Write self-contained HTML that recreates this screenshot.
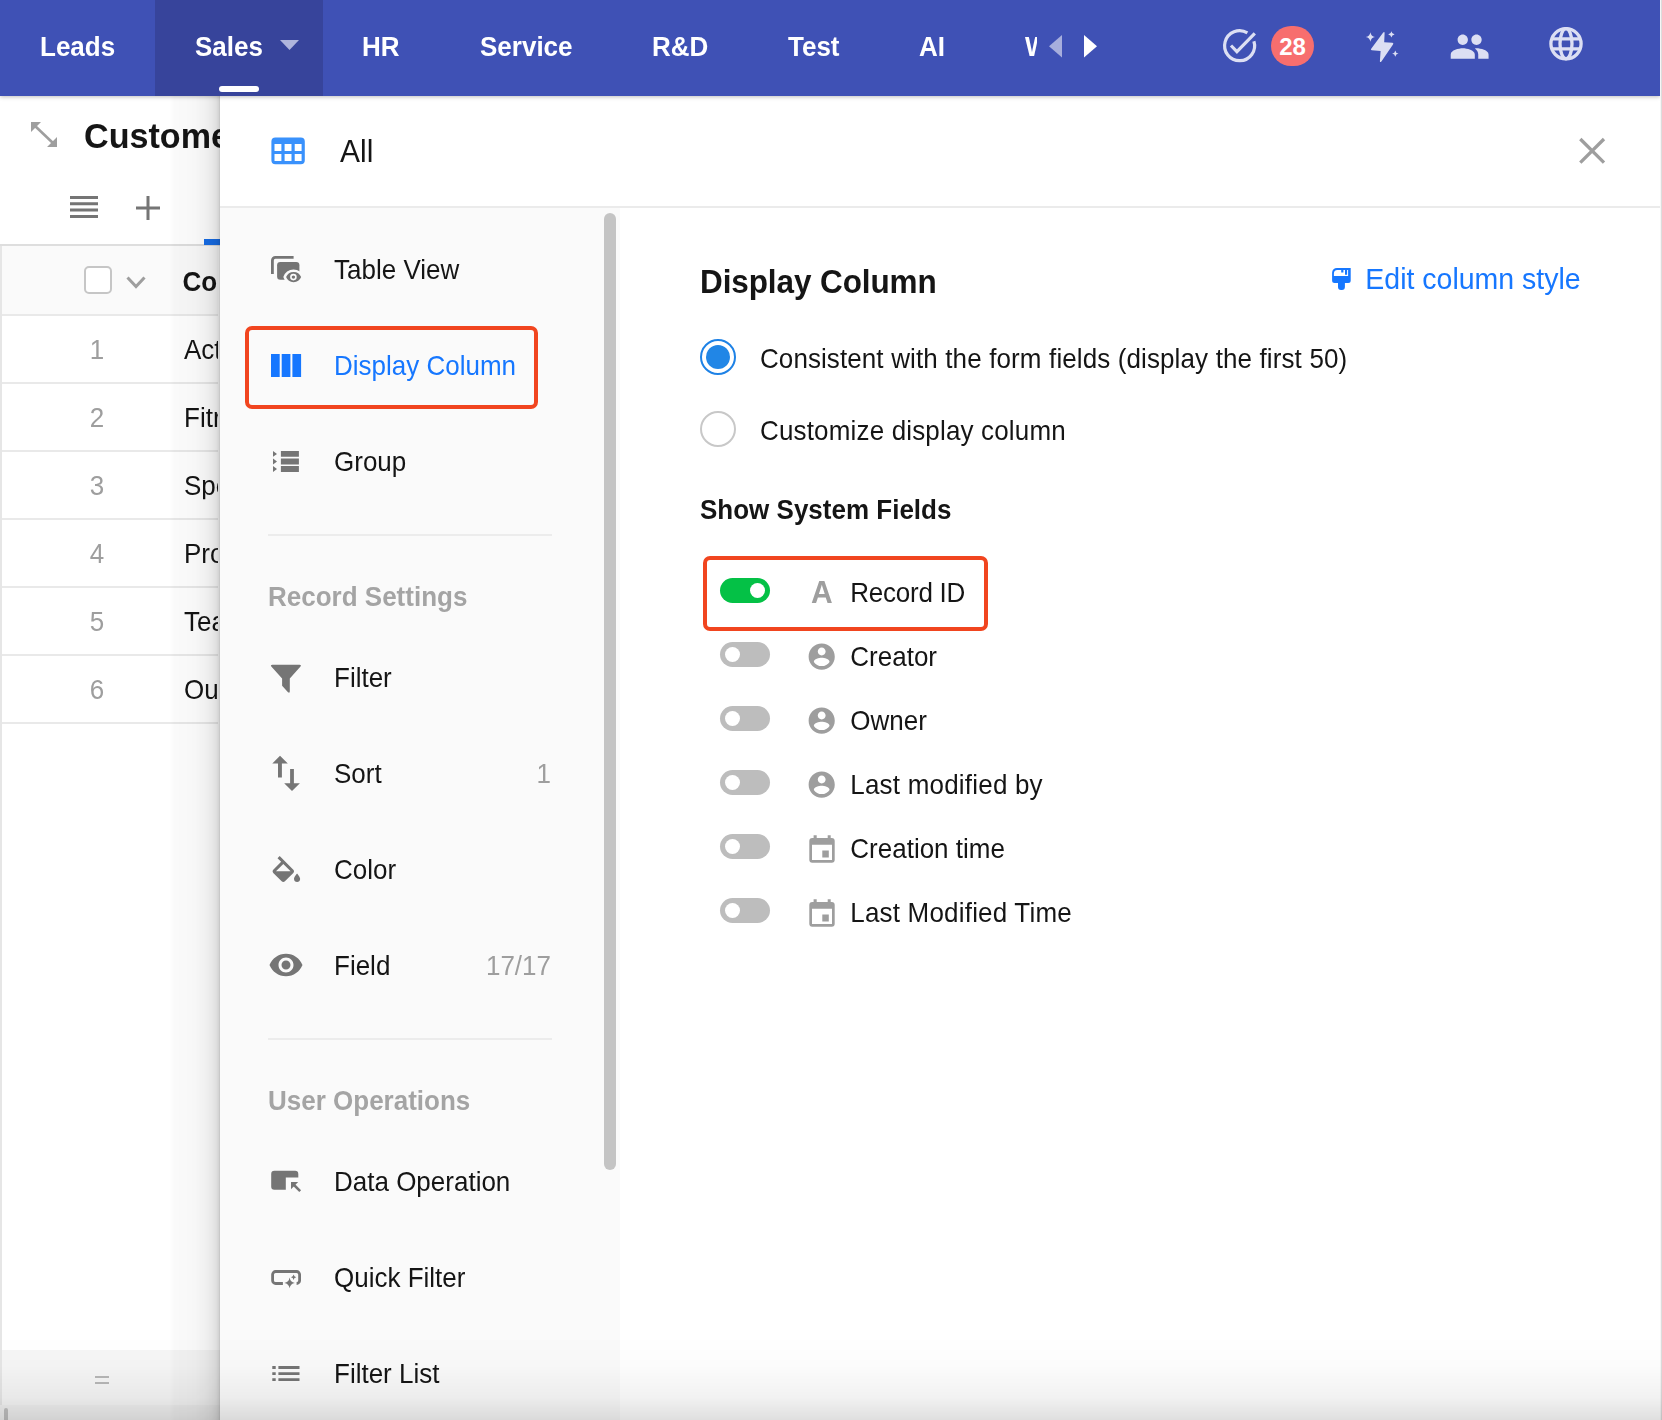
<!DOCTYPE html>
<html lang="en">
<head>
<meta charset="utf-8">
<title>Display Column</title>
<style>
*{box-sizing:border-box;margin:0;padding:0}
html,body{width:1662px;height:1420px;overflow:hidden;background:#fff}
body{font-family:"Liberation Sans",Arial,Helvetica,sans-serif;color:#151515;position:relative}
.abs{position:absolute}
.t{position:absolute;white-space:nowrap;line-height:1}
svg{position:absolute;display:block;overflow:visible}

/* nav */
#nav{position:absolute;left:0;top:0;width:1660px;height:96px;background:#3f51b5;box-shadow:0 1px 4px rgba(0,0,0,.25);z-index:5}
#nav .active{position:absolute;left:155px;top:0;width:168px;height:96px;background:#37449b}
#nav .ul{position:absolute;left:219px;top:85.700px;width:40px;height:6.300px;border-radius:3.200px;background:#fff}
#nav .tab{position:absolute;top:34px;font-size:26px;font-weight:bold;color:#fff;white-space:nowrap;line-height:1}

/* left list */
#left{position:absolute;left:0;top:96px;width:230px;height:1324px;background:#fff;overflow:hidden}
.row{position:absolute;left:2px;width:216px;height:2px;background:#e9e9e9}
.num{position:absolute;width:40px;left:77px;text-align:center;font-size:26px;color:#9e9e9e;line-height:1}
.cell{position:absolute;left:184px;width:33.700px;overflow:hidden;font-size:26px;color:#151515;line-height:1;white-space:nowrap}

/* panel */
#shadow{position:absolute;left:170px;top:96px;width:50px;height:1324px;z-index:3;
background:linear-gradient(to right,rgba(0,0,0,0) 0,rgba(0,0,0,.018) 4px,rgba(0,0,0,.022) 14px,rgba(0,0,0,.033) 25px,rgba(0,0,0,.06) 36px,rgba(0,0,0,.09) 42px,rgba(0,0,0,.12) 46px,rgba(0,0,0,.17) 48.500px,rgba(0,0,0,.24) 50px)}
#panel{position:absolute;left:220px;top:96px;width:1440px;height:1324px;background:#fff;z-index:4;overflow:hidden}
#side{position:absolute;left:0;top:112px;width:400px;height:1212px;background:#fafafa}
.mi{position:absolute;left:114px;font-size:26px;line-height:1;white-space:nowrap;color:#151515}
.cnt{position:absolute;right:69px;font-size:26px;line-height:1;color:#9e9e9e;white-space:nowrap}
.sec{position:absolute;left:48px;font-size:26px;font-weight:bold;line-height:1;color:#a4a4a4;white-space:nowrap}
.div{position:absolute;left:48px;width:284px;height:2px;background:#ececec}
.redbox{position:absolute;border:4px solid #f1451f;border-radius:7px}
.tg{position:absolute;left:500px;width:50px;height:25px;border-radius:13px;background:#bdbdbd}
.tg i{position:absolute;left:5px;top:5px;width:15px;height:15px;border-radius:50%;background:#fff}
.tg.on{background:#04c146}
.tg.on i{left:30px}
.fl{position:absolute;left:630px;font-size:26px;line-height:1;white-space:nowrap;color:#151515}
.t,.mi,.sec,.fl,.tab,.cnt,.cell,.num,.badge{will-change:opacity}
.t,.mi,.sec,.fl,.tab,.cnt,.cell,.num{transform:scaleY(1.04);transform-origin:0 84.650%}
</style>
</head>
<body>

<!-- NAV -->
<div id="nav">
  <div class="active"></div>
  <div class="ul"></div>
  <div class="tab" style="left:40px">Leads</div>
  <div class="tab" style="left:195px">Sales</div>
  <div class="tab" style="left:362px">HR</div>
  <div class="tab" style="left:480px">Service</div>
  <div class="tab" style="left:652px">R&amp;D</div>
  <div class="tab" style="left:788px">Test</div>
  <div class="tab" style="left:919px">AI</div>
  <div class="tab" style="left:1025px;width:12px;overflow:hidden">Wiki</div>
  <svg style="left:280px;top:40px" width="19" height="10" viewBox="0 0 19 10"><path d="M0 0h19L9.500 10z" fill="#afb5dd"/></svg>
  <svg style="left:1048.500px;top:35px" width="13" height="22.600" viewBox="0 0 13 22.600"><path d="M13 0v22.600L0 11.300z" fill="#a7aedd"/></svg>
  <svg style="left:1084.300px;top:35px" width="13" height="22.600" viewBox="0 0 13 22.600"><path d="M0 0v22.600L13 11.300z" fill="#fff"/></svg>

  <!-- check circle -->
  <svg style="left:1220px;top:26px" width="40" height="40" viewBox="1220 26 40 40"><g fill="none" stroke="#dcdff3" stroke-width="3.2">
    <path d="M1247.4 32.9 A15 15 0 1 0 1253.9 41.2"/>
    <path d="M1231 45.5 L1236.9 51.6 L1254.8 33.4"/></g></svg>
  <!-- badge -->
  <div class="abs badge" style="left:1271px;top:26px;width:43px;height:40px;border-radius:20px;background:#f76e6e;color:#fff;font-weight:bold;font-size:24px;line-height:42px;text-align:center">28</div>
  <!-- bolt -->
  <svg style="left:1362px;top:28px" width="40" height="38" viewBox="1362 28 40 38"><g fill="#dcdff3">
    <path d="M1383.2 32.6 Q1384.6 31.200 1384.6 33.2 L1384.2 42.2 L1392.4 42.8 Q1394 43 1393 44.4 L1381.400 61.400 Q1379.800 63 1379.900 60.900 L1380.600 50.900 L1371.800 50.300 Q1370.200 50 1371.200 48.700 Z"/>
    <path d="M1370.400 32.2 Q1371 36.400 1375 37 Q1371 37.600 1370.400 41.800 Q1369.800 37.600 1365.800 37 Q1369.800 36.400 1370.400 32.2Z"/>
    <path d="M1391.400 31.200 Q1391.800 34 1394.600 34.400 Q1391.800 34.800 1391.400 37.600 Q1391 34.800 1388.200 34.400 Q1391 34 1391.400 31.200Z"/>
    <path d="M1395.300 50.400 Q1395.700 53.200 1398.500 53.600 Q1395.700 54 1395.300 56.800 Q1394.900 54 1392.100 53.600 Q1394.900 53.200 1395.300 50.400Z"/></g></svg>
  <!-- people -->
  <svg style="left:1449.400px;top:25.500px" width="41.300" height="41.300" viewBox="0 0 24 24"><path fill="#dcdff3" d="M16 11c1.660 0 2.990-1.340 2.990-3S17.660 5 16 5c-1.660 0-3 1.340-3 3s1.340 3 3 3zm-8 0c1.660 0 2.990-1.340 2.990-3S9.660 5 8 5C6.340 5 5 6.340 5 8s1.340 3 3 3zm0 2c-2.330 0-7 1.170-7 3.500V19h14v-2.500c0-2.330-4.670-3.500-7-3.500zm8 0c-.29 0-.62.020-.97.050 1.160.84 1.970 1.970 1.970 3.450V19h6v-2.500c0-2.330-4.670-3.500-7-3.500z"/></svg>
  <!-- globe -->
  <svg style="left:1546px;top:24px" width="40" height="40" viewBox="1546 24 40 40"><g fill="none" stroke="#dcdff3" stroke-width="3.300">
    <circle cx="1566" cy="43.800" r="15.100"/><ellipse cx="1566" cy="43.800" rx="6" ry="15.100"/>
    <path d="M1552 38.900H1580M1552 48.800H1580"/></g></svg>
</div>

<!-- LEFT -->
<div id="left">

  <!-- expand icon -->
  <svg style="left:30px;top:25.200px" width="28" height="27" viewBox="0 0 28 27"><g fill="none" stroke="#9e9e9e" stroke-width="2.6"><path d="M4 4L24 23"/></g><path d="M1 1h10L1 11z M27 26h-10L27 16z" fill="#9e9e9e"/></svg>
  <div class="t" style="left:83.600px;top:22.600px;font-size:35.500px;font-weight:bold;color:#151515;transform:scaleX(.961);transform-origin:0 0">Customers</div>
  <!-- hamburger -->
  <svg style="left:70px;top:100px" width="28" height="22" viewBox="0 0 28 22"><path d="M0 0h28v3H0zM0 6.3h28v3H0zM0 12.6h28v3H0zM0 18.9h28v3H0z" fill="#757575"/></svg>
  <!-- plus -->
  <svg style="left:136px;top:100px" width="24" height="24" viewBox="0 0 24 24"><path d="M10.5 0h3v10.5H24v3H13.500V24h-3V13.500H0v-3h10.500z" fill="#757575"/></svg>
  <div class="abs" style="left:0;top:148px;width:230px;height:2px;background:#dedede"></div>
  <div class="abs" style="left:204px;top:143px;width:30px;height:6px;background:#176ee9"></div>
  <!-- table header -->
  <div class="abs" style="left:0;top:150px;width:218px;height:68px;background:#fafafa"></div>
  <div class="abs" style="left:0;top:150px;width:2px;height:1160px;background:#e6e6e6"></div>
  <div class="abs" style="left:84px;top:170px;width:28px;height:28px;border:2px solid #c6c6c6;border-radius:5px;background:#fff"></div>
  <svg style="left:126px;top:180px" width="20" height="13" viewBox="0 0 20 13"><path d="M1.500 1.500L10 10.500L18.500 1.500" fill="none" stroke="#9e9e9e" stroke-width="3"/></svg>
  <div class="t" style="left:182.500px;top:173px;font-size:26px;font-weight:bold;color:#151515;width:35px;overflow:hidden">Company</div>
  <div class="row" style="top:218px"></div>
  <div class="num" style="top:240.7px">1</div><div class="cell" style="top:240.7px">Acton</div>
  <div class="row" style="top:286px"></div>
  <div class="num" style="top:308.7px">2</div><div class="cell" style="top:308.7px">Fitrix</div>
  <div class="row" style="top:354px"></div>
  <div class="num" style="top:376.7px">3</div><div class="cell" style="top:376.7px">Spectra</div>
  <div class="row" style="top:422px"></div>
  <div class="num" style="top:444.7px">4</div><div class="cell" style="top:444.7px">Proline</div>
  <div class="row" style="top:490px"></div>
  <div class="num" style="top:512.7px">5</div><div class="cell" style="top:512.7px">Teamwork</div>
  <div class="row" style="top:558px"></div>
  <div class="num" style="top:580.7px">6</div><div class="cell" style="top:580.7px">Outlook</div>
  <div class="row" style="top:626px"></div>

  <!-- bottom bar -->
  <div class="abs" style="left:2px;top:1254px;width:230px;height:56px;background:#f6f6f6"></div>
  <div class="abs" style="left:95px;top:1280px;width:14px;height:2px;background:#b8b8b8"></div>
  <div class="abs" style="left:95px;top:1286px;width:14px;height:2px;background:#b8b8b8"></div>
  <div class="abs" style="left:0;top:1309px;width:230px;height:15px;background:#f1f1f1"></div>
  <div class="abs" style="left:4px;top:1312px;width:4px;height:14px;border-radius:2px;background:#c1c1c1"></div>
</div>

<div id="shadow"></div>

<!-- PANEL -->
<div id="panel">
  <!-- header -->
  <svg style="left:48px;top:38px" width="40" height="34" viewBox="268 134 40 34"><path fill="#3991fc" fill-rule="evenodd" d="M275.400 137.600H300.800a4 4 0 0 1 4 4V160.200a4 4 0 0 1-4 4H275.400a4 4 0 0 1-4-4V141.600a4 4 0 0 1 4-4z M274.500 143.900v7h6.900v-7z M284.600 143.900v7h6.900v-7z M294.700 143.900v7h6.900v-7z M274.500 154.100v7h6.900v-7z M284.600 154.100v7h6.900v-7z M294.700 154.100v7h6.900v-7z"/></svg>
  <div class="t" style="left:120px;top:40.500px;font-size:30px;color:#151515">All</div>
  <svg style="left:1356px;top:38px" width="32" height="32" viewBox="1576 134 32 32"><path d="M1580.300 139L1604 162.700M1604 139L1580.300 162.700" stroke="#9e9e9e" stroke-width="3.300" fill="none"/></svg>
  <div class="abs" style="left:0;top:110px;width:1440px;height:2px;background:#ebebeb"></div>
  <div id="side"></div>
  <div class="abs" style="left:384.200px;top:117px;width:11.800px;height:956.500px;border-radius:6px;background:#c4c4c4"></div>
  <div class="mi" style="top:160.7px;color:#151515">Table View</div>
  <div class="mi" style="top:256.7px;color:#1677ff">Display Column</div>
  <div class="mi" style="top:352.7px;color:#151515">Group</div>
  <div class="div" style="top:438px"></div>
  <div class="sec" style="top:488.4px">Record Settings</div>
  <div class="mi" style="top:568.7px;color:#151515">Filter</div>
  <div class="mi" style="top:664.7px;color:#151515">Sort</div>
  <div class="mi" style="top:760.7px;color:#151515">Color</div>
  <div class="mi" style="top:856.7px;color:#151515">Field</div>
  <div class="div" style="top:942px"></div>
  <div class="sec" style="top:992.4px">User Operations</div>
  <div class="mi" style="top:1072.7px;color:#151515">Data Operation</div>
  <div class="mi" style="top:1168.7px;color:#151515">Quick Filter</div>
  <div class="mi" style="top:1264.7px;color:#151515">Filter List</div>
  <div class="cnt" style="left:231px;width:100px;text-align:right;top:664.7px">1</div>
  <div class="cnt" style="left:231px;width:100px;text-align:right;top:856.7px">17/17</div>
  <div class="redbox" style="left:25px;top:230px;width:293px;height:83px"></div>
  <svg style="left:48px;top:156px" width="36" height="34" viewBox="268 252 36 34"><path d="M272.400 273.900V260.400a3 3 0 0 1 3-3H293.600" fill="none" stroke="#757575" stroke-width="2.800"/>
<rect x="277.100" y="262" width="22.300" height="17.800" rx="3.200" fill="#757575"/>
<path d="M283.300 277.100A10.600 10.600 0 0 1 303.700 277.100A10.600 10.600 0 0 1 283.300 277.100Z" fill="#fafafa"/>
<path d="M286.100 277.100A8.050 8.050 0 0 1 301.100 277.100A8.050 8.050 0 0 1 286.100 277.100Z" fill="#757575"/>
<circle cx="293.400" cy="277.100" r="3.300" fill="#fafafa"/><circle cx="293.400" cy="277.100" r="1.700" fill="#757575"/></svg>
  <svg style="left:48px;top:256px" width="36" height="28" viewBox="268 352 36 28"><path fill="#1677ff" d="M271 354.100h8.700v22.900H271zM281.700 354.100h8.700v22.900h-8.700zM292.400 354.100h8.700v22.900h-8.700z"/></svg>
  <svg style="left:50px;top:352px" width="32" height="28" viewBox="270 448 32 28"><path fill="#757575" d="M280.900 451h18v5.800h-18zM280.900 458.600h18v5.800h-18zM280.900 466.100h18v5.800h-18zM273 451l4 2.900l-4 2.900zM273 458.600l4 2.900l-4 2.900zM273 466.100l4 2.900l-4 2.900z"/></svg>
  <svg style="left:48px;top:564px" width="36" height="36" viewBox="268 660 36 36"><path fill="#757575" d="M271.300 666.400Q270.200 664.700 272.300 664.700H299.600Q301.700 664.700 300.500 666.400L289.800 678.600V691.300Q289.800 693.600 288 692.300L282.100 685.700V678.600Z"/></svg>
  <svg style="left:48px;top:656px" width="36" height="42" viewBox="268 752 36 42"><path fill="#757575" d="M280 755.800L287.800 763.600H281.900V777.600H278V763.600H272.300ZM292 791L284.200 783.300H290.100V769.100H293.900V783.300H299.900Z"/></svg>
  <svg style="left:47.69999999999999px;top:760.2px" width="36.720" height="36.720" viewBox="0 0 24 24"><path fill="#757575" d="M16.560 8.940L7.620 0 6.210 1.410l2.380 2.380-5.150 5.150c-.59.59-.59 1.540 0 2.120l5.500 5.500c.29.29.68.44 1.060.44s.77-.15 1.060-.44l5.500-5.500c.59-.58.59-1.530 0-2.120zM5.210 10L10 5.210 14.790 10H5.210zM19 11.500s-2 2.170-2 3.500c0 1.100.9 2 2 2s2-.9 2-2c0-1.330-2-3.500-2-3.500z"/></svg>
  <svg style="left:48.10000000000002px;top:851.45px" width="36" height="36" viewBox="0 0 24 24"><path fill="#757575" d="M12 4.500C7 4.500 2.730 7.610 1 12c1.730 4.390 6 7.500 11 7.500s9.270-3.110 11-7.500c-1.730-4.390-6-7.500-11-7.500zM12 17c-2.760 0-5-2.240-5-5s2.240-5 5-5 5 2.240 5 5-2.240 5-5 5zm0-8c-1.660 0-3 1.340-3 3s1.340 3 3 3 3-1.340 3-3-1.340-3-3-3z"/></svg>
  <svg style="left:48px;top:1070px" width="36" height="30" viewBox="268 1166 36 30"><path fill="#757575" d="M274.400 1170.800H295.100a3.200 3.200 0 0 1 3.200 3.200V1177.500H285.800V1189.800H274.400a3.200 3.200 0 0 1-3.200-3.200V1174a3.200 3.200 0 0 1 3.200-3.200z"/><path fill="#757575" d="M291 1182H298.200L291 1189.200Z"/><path d="M293.500 1184.500L300.200 1191.200" stroke="#757575" stroke-width="2.500" fill="none"/></svg>
  <svg style="left:48px;top:1170px" width="36" height="26" viewBox="268 1266 36 26"><path d="M282.900 1283.500H275.600a3 3 0 0 1-3-3V1274.500a3 3 0 0 1 3-3H296.600a3 3 0 0 1 3 3V1280.500a3 3 0 0 1-3 3" fill="none" stroke="#757575" stroke-width="2.800"/><path fill="#757575" d="M289.600 1277.600Q290.300 1282.200 294.900 1282.900Q290.300 1283.600 289.600 1288.200Q288.900 1283.600 284.300 1282.900Q288.900 1282.200 289.600 1277.600ZM293.600 1274.600Q293.950 1276.950 296.300 1277.300Q293.950 1277.650 293.600 1280Q293.250 1277.650 290.900 1277.300Q293.250 1276.950 293.600 1274.600Z"/></svg>
  <svg style="left:50px;top:1266px" width="32" height="24" viewBox="270 1362 32 24"><path fill="#757575" d="M272.300 1366.100h3.400v2.800h-3.400zM278.400 1366.100h21.100v2.800h-21.100zM272.300 1372.150h3.400v2.800h-3.400zM278.400 1372.150h21.100v2.800h-21.100zM272.300 1378.200h3.400v2.800h-3.400zM278.400 1378.200h21.100v2.800h-21.100z"/></svg>
  <div class="t" style="left:480px;top:170.900px;font-size:31.500px;letter-spacing:-.1px;font-weight:bold;color:#151515">Display Column</div>
  <div class="t" style="left:1145.300px;top:169px;font-size:28.500px;color:#1677ff">Edit column style</div>
  <svg style="left:1110px;top:170px" width="24" height="26" viewBox="1330 266 24 26"><path fill="#1677ff" fill-rule="evenodd" d="M1337 267.900H1350.700V280.400a2.500 2.500 0 0 1-2.500 2.500H1344.900V287a3 3 0 0 1-3 3H1341a3 3 0 0 1-3-3V282.900H1334.600a2.500 2.500 0 0 1-2.500-2.500V272.800a4.900 4.900 0 0 1 4.900-4.900z M1337.400 269.900a3.500 3.500 0 0 0-3.500 3.500V275.900H1348.100V269.900H1347.100V274.800H1345V269.900H1343.400V272.600H1341.200V269.900Z"/></svg>
  <div class="abs" style="left:480px;top:243px;width:36px;height:36px;border-radius:50%;border:2px solid #1e82e6;background:#fff"></div>
  <div class="abs" style="left:486px;top:249px;width:24px;height:24px;border-radius:50%;background:#2186e6"></div>
  <div class="t" style="left:540px;top:249.600px;font-size:26px;letter-spacing:.08px;word-spacing:.25px">Consistent with the form fields (display the first 50)</div>
  <div class="abs" style="left:480px;top:315px;width:36px;height:36px;border-radius:50%;border:2px solid #c8c8c8;background:#fff"></div>
  <div class="t" style="left:540px;top:321.600px;font-size:26px;letter-spacing:.16px">Customize display column</div>
  <div class="t" style="left:480px;top:401.200px;font-size:26px;font-weight:bold">Show System Fields</div>
  <div class="redbox" style="left:483px;top:460px;width:285px;height:75px"></div>
  <div class="tg on" style="top:482.0px"><i></i></div>
  <div class="fl" style="left:630.300px;top:484.3px;letter-spacing:-.25px">Record ID</div>
  <div class="t" style="left:591px;top:482.4px;font-size:30px;font-weight:bold;color:#9e9e9e">A</div>
  <div class="tg" style="top:546.0px"><i></i></div>
  <div class="fl" style="left:630.300px;top:548.3px">Creator</div>
  <svg style="left:586.3px;top:545.3px" width="31.400" height="31.400" viewBox="0 0 24 24"><path fill="#9e9e9e" d="M12 2C6.480 2 2 6.480 2 12s4.480 10 10 10 10-4.480 10-10S17.520 2 12 2zm0 3c1.660 0 3 1.340 3 3s-1.340 3-3 3-3-1.340-3-3 1.340-3 3-3zm0 14.200c-2.500 0-4.710-1.280-6-3.220.03-1.990 4-3.080 6-3.080 1.990 0 5.970 1.090 6 3.080-1.290 1.940-3.500 3.220-6 3.220z"/></svg>
  <div class="tg" style="top:610.0px"><i></i></div>
  <div class="fl" style="left:630.300px;top:612.3px">Owner</div>
  <svg style="left:586.3px;top:609.3px" width="31.400" height="31.400" viewBox="0 0 24 24"><path fill="#9e9e9e" d="M12 2C6.480 2 2 6.480 2 12s4.480 10 10 10 10-4.480 10-10S17.520 2 12 2zm0 3c1.660 0 3 1.340 3 3s-1.340 3-3 3-3-1.340-3-3 1.340-3 3-3zm0 14.200c-2.500 0-4.710-1.280-6-3.220.03-1.990 4-3.080 6-3.080 1.990 0 5.970 1.090 6 3.080-1.290 1.940-3.500 3.220-6 3.220z"/></svg>
  <div class="tg" style="top:674.0px"><i></i></div>
  <div class="fl" style="left:630.300px;top:676.3px;letter-spacing:.2px">Last modified by</div>
  <svg style="left:586.3px;top:673.3px" width="31.400" height="31.400" viewBox="0 0 24 24"><path fill="#9e9e9e" d="M12 2C6.480 2 2 6.480 2 12s4.480 10 10 10 10-4.480 10-10S17.520 2 12 2zm0 3c1.660 0 3 1.340 3 3s-1.340 3-3 3-3-1.340-3-3 1.340-3 3-3zm0 14.200c-2.500 0-4.710-1.280-6-3.220.03-1.990 4-3.080 6-3.080 1.990 0 5.970 1.090 6 3.080-1.290 1.940-3.500 3.220-6 3.220z"/></svg>
  <div class="tg" style="top:738.0px"><i></i></div>
  <div class="fl" style="left:630.300px;top:740.3px">Creation time</div>
  <svg style="left:586px;top:736px" width="32" height="34" viewBox="806 832 32 34"><path fill="#9e9e9e" fill-rule="evenodd" d="M813.600 835.200h3.100v2.900h11v-2.900h3v2.900h1a3 3 0 0 1 3 3V859.800a3 3 0 0 1-3 3H812.300a3 3 0 0 1-3-3V841.100a3 3 0 0 1 3-3h1.300z M812 844.800V860.100H832V844.800Z M822.300 850.500h6.500v7.100h-6.500z"/></svg>
  <div class="tg" style="top:802.0px"><i></i></div>
  <div class="fl" style="left:630.300px;top:804.3px;letter-spacing:.19px">Last Modified Time</div>
  <svg style="left:586px;top:800px" width="32" height="34" viewBox="806 832 32 34"><path fill="#9e9e9e" fill-rule="evenodd" d="M813.600 835.200h3.100v2.900h11v-2.900h3v2.900h1a3 3 0 0 1 3 3V859.800a3 3 0 0 1-3 3H812.300a3 3 0 0 1-3-3V841.100a3 3 0 0 1 3-3h1.300z M812 844.800V860.100H832V844.800Z M822.300 850.500h6.500v7.100h-6.500z"/></svg>
</div>

<div class="abs" style="left:0;top:1335px;width:1662px;height:85px;z-index:7;background:linear-gradient(to bottom,rgba(0,0,0,0) 0,rgba(0,0,0,.012) 30px,rgba(0,0,0,.05) 62px,rgba(0,0,0,.125) 85px)"></div>
<!-- right edge strip -->
<div class="abs" style="left:1660px;top:0;width:2px;height:1420px;background:linear-gradient(to right,#f6f6f6 0,#f6f6f6 .7px,#dcdcdc .7px);z-index:6"></div>
</body>
</html>
